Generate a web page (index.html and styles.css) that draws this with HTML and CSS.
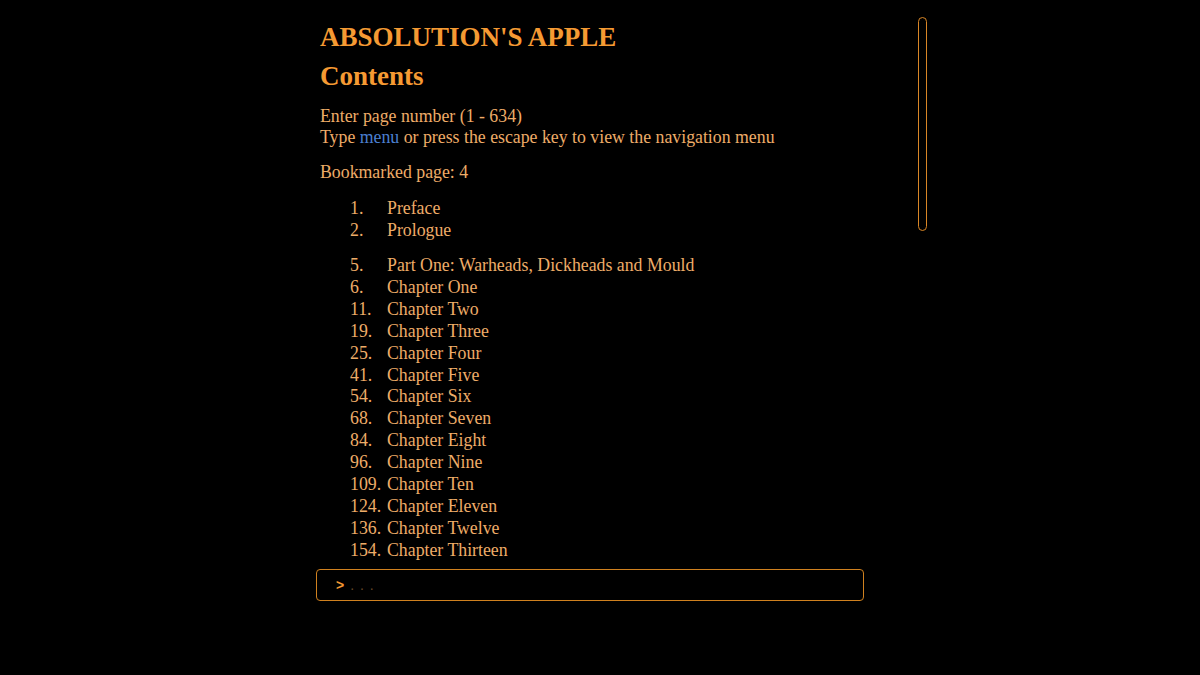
FILE: index.html
```html
<!DOCTYPE html>
<html lang="en">
<head>
<meta charset="utf-8">
<title>Absolution's Apple - Contents</title>
<link rel="stylesheet" href="styles.css">
</head>
<body>
<div class="app">
  <div class="screen">
    <div class="content">
      <h1 class="title">ABSOLUTION'S APPLE</h1>
      <h2 class="subtitle">Contents</h2>
      <p class="info">Enter page number (1 - 634)<br>Type <span class="cmd">menu</span> or press the escape key to view the navigation menu</p>
      <p class="info bookmark">Bookmarked page: 4</p>
      <ul class="toc">
        <li class="row"><span class="num">1.</span><span class="name">Preface</span></li>
        <li class="row"><span class="num">2.</span><span class="name">Prologue</span></li>
      </ul>
      <ul class="toc toc-main">
        <li class="row"><span class="num">5.</span><span class="name">Part One: Warheads, Dickheads and Mould</span></li>
        <li class="row"><span class="num">6.</span><span class="name">Chapter One</span></li>
        <li class="row"><span class="num">11.</span><span class="name">Chapter Two</span></li>
        <li class="row"><span class="num">19.</span><span class="name">Chapter Three</span></li>
        <li class="row"><span class="num">25.</span><span class="name">Chapter Four</span></li>
        <li class="row"><span class="num">41.</span><span class="name">Chapter Five</span></li>
        <li class="row"><span class="num">54.</span><span class="name">Chapter Six</span></li>
        <li class="row"><span class="num">68.</span><span class="name">Chapter Seven</span></li>
        <li class="row"><span class="num">84.</span><span class="name">Chapter Eight</span></li>
        <li class="row"><span class="num">96.</span><span class="name">Chapter Nine</span></li>
        <li class="row"><span class="num">109.</span><span class="name">Chapter Ten</span></li>
        <li class="row"><span class="num">124.</span><span class="name">Chapter Eleven</span></li>
        <li class="row"><span class="num">136.</span><span class="name">Chapter Twelve</span></li>
        <li class="row"><span class="num">154.</span><span class="name">Chapter Thirteen</span></li>
      </ul>
    </div>
    <div class="thumb"></div>
  </div>
  <div class="prompt"><span class="caret">&gt;</span><span class="placeholder">. . .</span></div>
</div>
</body>
</html>
```
FILE: styles.css
```css
html, body {
  margin: 0;
  padding: 0;
  background: #000;
}
body {
  font-family: "Liberation Serif", "DejaVu Serif", serif;
  color: #eeac68;
}
.app {
  padding: 17px 0 0 316px;
}
.screen {
  position: relative;
  width: 614px;
  height: 547px;
  overflow: hidden;
}
.content {
  padding-left: 4px;
}
.title {
  margin: 0;
  font-size: 27px;
  line-height: 40px;
  font-weight: bold;
  color: #f59a33;
}
.subtitle {
  margin: 0;
  font-size: 27px;
  line-height: 38px;
  font-weight: bold;
  color: #f59a33;
}
.info {
  margin: 11px 0 0;
  font-size: 17.8px;
  line-height: 21px;
}
.bookmark {
  margin-top: 14px;
}
.cmd {
  color: #4a7fcf;
}
.toc {
  list-style: none;
  margin: 14px 0 0;
  padding: 0 0 0 30px;
  font-size: 17.8px;
  line-height: 22px;
}
.toc-main {
  margin-top: 14px;
  line-height: 21.9px;
}
.row {
  display: flex;
}
.num {
  flex: 0 0 37px;
  white-space: nowrap;
}
.thumb {
  position: absolute;
  top: 0;
  right: 3px;
  width: 7px;
  height: 212px;
  border: 1.5px solid #d98626;
  border-radius: 5px;
}
.prompt {
  box-sizing: border-box;
  margin-top: 5px;
  width: 548px;
  height: 32px;
  border: 1px solid #d0811f;
  border-radius: 4px;
  padding: 0 0 0 19px;
  display: flex;
  align-items: center;
  font-family: "Liberation Sans", sans-serif;
  font-size: 14px;
}
.caret {
  color: #f59a33;
  font-weight: bold;
  margin-right: 6px;
}
.placeholder {
  color: #6a4a28;
  letter-spacing: 1px;
}
```
